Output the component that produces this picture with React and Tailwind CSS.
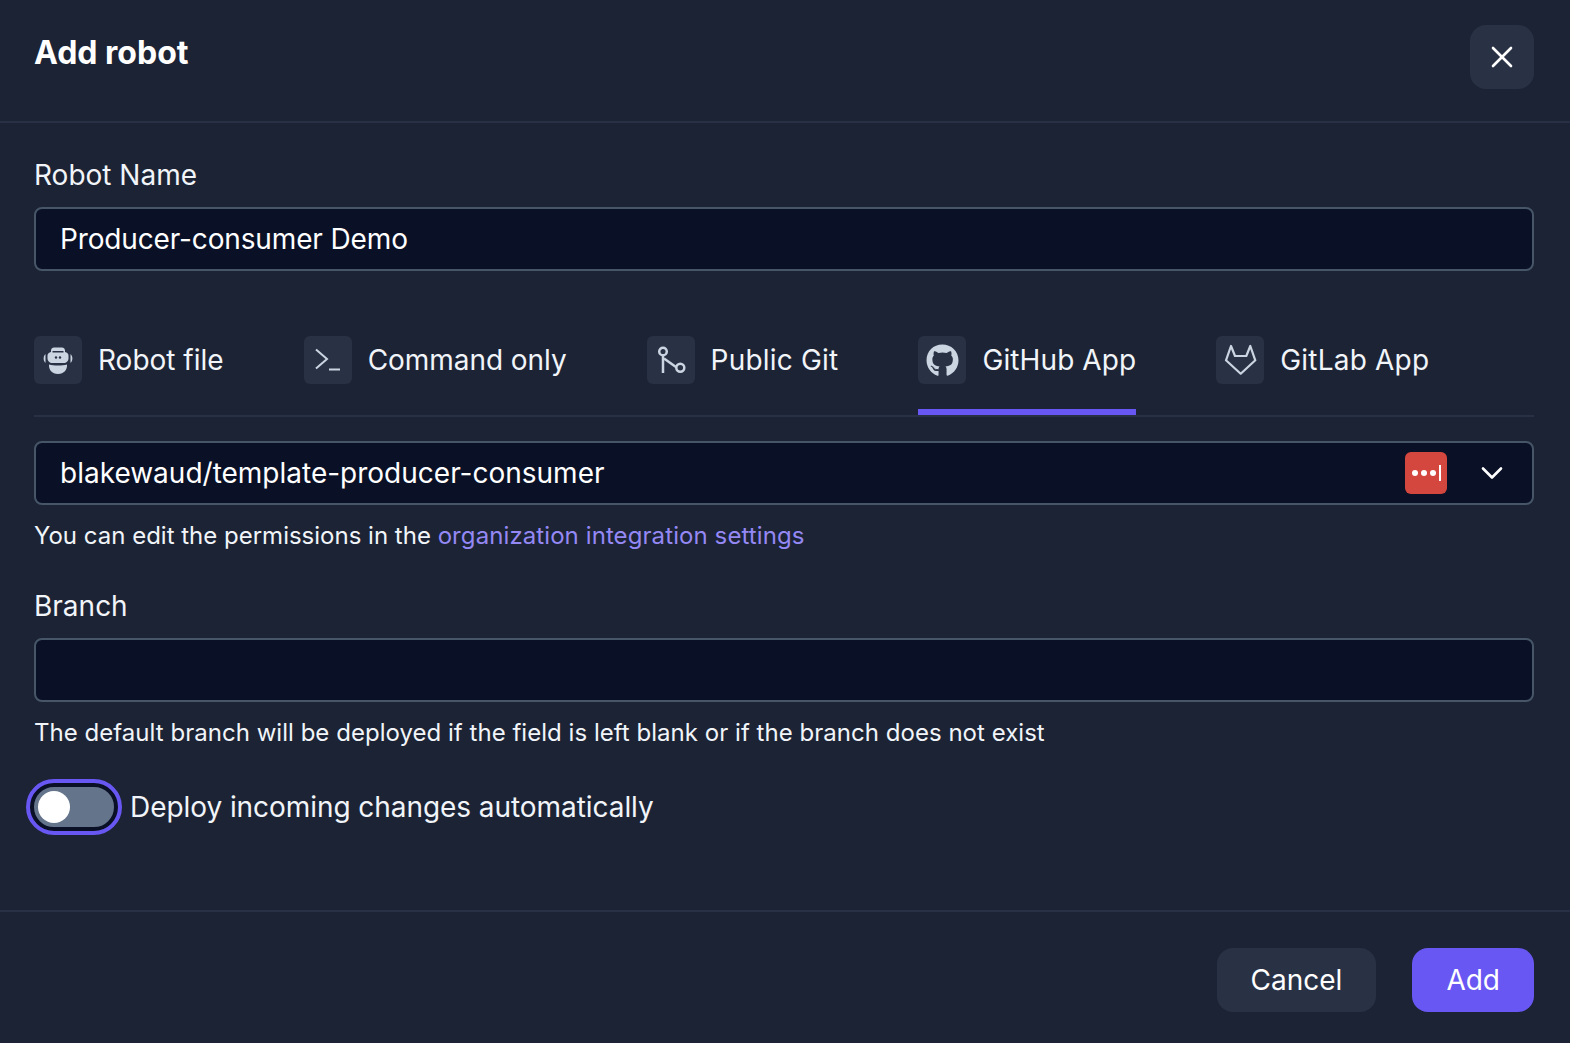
import React from 'react';
import { X, ChevronDown } from 'lucide-react';
import { FaGithub } from 'react-icons/fa';

function RobotIcon() {
  return (
    <svg width="34" height="34" viewBox="0 0 34 34" fill="#cbd5e1">
      <path d="M10 7.500C10 5.500 11.500 4.500 13 4.500h8c1.500 0 3 1 3 3V9c2 .5 3.500 1.500 3.500 3.500v3c0 2-1.500 4-3.500 4.500H10c-2-.5-3.500-2.500-3.500-4.500v-3C6.500 10.500 8 9.500 10 9z" />
      <path d="M8 21.500c2.500 .8 5.500 1 9 1s6.500-.2 9-1c.5 5-3 9.500-9 9.500s-9.500-4.500-9-9.500z" />
      <path d="M4.500 11C2 13 2 18 4.500 20z" />
      <path d="M29.500 11c2.500 2 2.500 7 0 9z" />
      <rect x="11.500" y="8" width="11" height="1.500" fill="#293245" />
      <circle cx="15" cy="14.500" r="1.200" fill="#293245" />
      <circle cx="19" cy="14.500" r="1.200" fill="#293245" />
    </svg>
  );
}

function TerminalIcon() {
  return (
    <svg width="34" height="34" viewBox="0 0 34 34" fill="none" stroke="#cbd5e1" strokeWidth="2">
      <path d="M5 6.500l11 9.500-11 9.500" />
      <path d="M18 26.500h11" />
    </svg>
  );
}

function GitIcon() {
  return (
    <svg width="34" height="34" viewBox="0 0 34 34" fill="none" stroke="#cbd5e1" strokeWidth="2.500">
      <circle cx="9" cy="8.500" r="3.800" />
      <circle cx="26.300" cy="24.700" r="4" />
      <path d="M9 12.300V30" />
      <path d="M10 15.500l12.300 8.700" />
    </svg>
  );
}

function GitlabIcon() {
  return (
    <svg width="34" height="34" viewBox="0 0 34 34" fill="none" stroke="#cbd5e1" strokeWidth="2.200" strokeLinejoin="round">
      <path d="M17.700 30.700L3 17.300 8 3l4 10h11.300l4-10 5 14.300z" />
    </svg>
  );
}

const tabs = [
  { label: 'Robot file', icon: <RobotIcon />, cls: 'tracking-[0px]' },
  { label: 'Command only', icon: <TerminalIcon />, cls: 'tracking-[-0.05px]' },
  { label: 'Public Git', icon: <GitIcon />, cls: 'tracking-[0.2px]' },
  { label: 'GitHub App', icon: <FaGithub size={33} color="#cbd5e1" />, cls: 'tracking-[0.1px]', active: true },
  { label: 'GitLab App', icon: <GitlabIcon />, cls: 'tracking-[0.2px]' },
];

export default function App() {
  return (
    <div className="min-h-[1043px] bg-[#1c2334] text-[#f1f5f9] font-['Inter',sans-serif] flex flex-col">
      {/* Header */}
      <div className="h-[123px] shrink-0 border-b-2 border-[#273044] pl-[34px] pr-[36px] pt-[25px] flex justify-between items-start">
        <h1 className="text-[32px] leading-[56px] font-bold text-white">Add robot</h1>
        <button className="w-16 h-16 rounded-2xl bg-[#293245] flex items-center justify-center text-white">
          <X size={36} strokeWidth={1.750} />
        </button>
      </div>

      {/* Body */}
      <div className="flex-1 pl-[34px] pr-[36px] pt-[32px]">
        <label className="block text-[28px] leading-[40px] mb-[12px]">Robot Name</label>
        <div className="h-16 rounded-lg border-2 border-[#475569] bg-[#0a1026] px-6 flex items-center text-[28px] tracking-[-0.14px] text-white">
          Producer-consumer Demo
        </div>

        <div className="mt-[65px] flex gap-20 border-b-2 border-[#273044] h-[81px]">
          {tabs.map((t) => (
            <div key={t.label} className={`flex items-start gap-4 h-[79px] ${t.active ? 'border-b-[6px] border-[#6857f2]' : ''}`}>
              <div className="w-12 h-12 rounded-md bg-[#293245] flex items-center justify-center">{t.icon}</div>
              <span className={`text-[28px] leading-[49px] ${t.cls}`}>{t.label}</span>
            </div>
          ))}
        </div>

        <div className="mt-[24px] h-16 rounded-lg border-2 border-[#475569] bg-[#0a1026] pl-6 pr-[22px] flex items-center justify-between text-[28px] text-white">
          <span>blakewaud/template-producer-consumer</span>
          <div className="flex items-center gap-[27px]">
            <div className="w-[42px] h-[42px] rounded-md bg-[#d4473f] flex items-center justify-center gap-[3px]">
              <span className="w-[6px] h-[6px] rounded-full bg-white" />
              <span className="w-[6px] h-[6px] rounded-full bg-white" />
              <span className="w-[6px] h-[6px] rounded-full bg-white" />
              <span className="w-[2px] h-[16px] bg-white" />
            </div>
            <ChevronDown size={36} strokeWidth={1.750} />
          </div>
        </div>
        <p className="mt-[13px] text-[24px] leading-[36px]">
          You can edit the permissions in the <a className="text-[#9488f5] tracking-[0.09px]">organization integration settings</a>
        </p>

        <label className="block mt-[32px] text-[28px] leading-[40px] mb-[12px]">Branch</label>
        <div className="h-16 rounded-lg border-2 border-[#475569] bg-[#0a1026]" />
        <p className="mt-[13px] text-[24px] leading-[36px] tracking-[0.03px]">
          The default branch will be deployed if the field is left blank or if the branch does not exist
        </p>

        <div className="mt-[32px] flex items-center gap-[8px]">
          <div className="ml-[-4px] w-[88px] h-[48px] rounded-full bg-[#64748b] flex items-center px-1 outline-[4px] outline-[#6857f2] border-[4px] border-[#0a1026]">
            <span className="w-8 h-8 rounded-full bg-white" />
          </div>
          <span className="text-[28px] ml-[4px] tracking-[-0.06px]">Deploy incoming changes automatically</span>
        </div>
      </div>

      {/* Footer */}
      <div className="h-[133px] shrink-0 border-t-2 border-[#273044] pl-[34px] pr-[36px] pt-[4px] flex items-center justify-end gap-9">
        <button className="h-16 px-[34px] rounded-2xl bg-[#293245] text-[28px] text-white">Cancel</button>
        <button className="h-16 px-[34px] rounded-2xl bg-[#6857f2] text-[28px] text-white">Add</button>
      </div>
    </div>
  );
}
